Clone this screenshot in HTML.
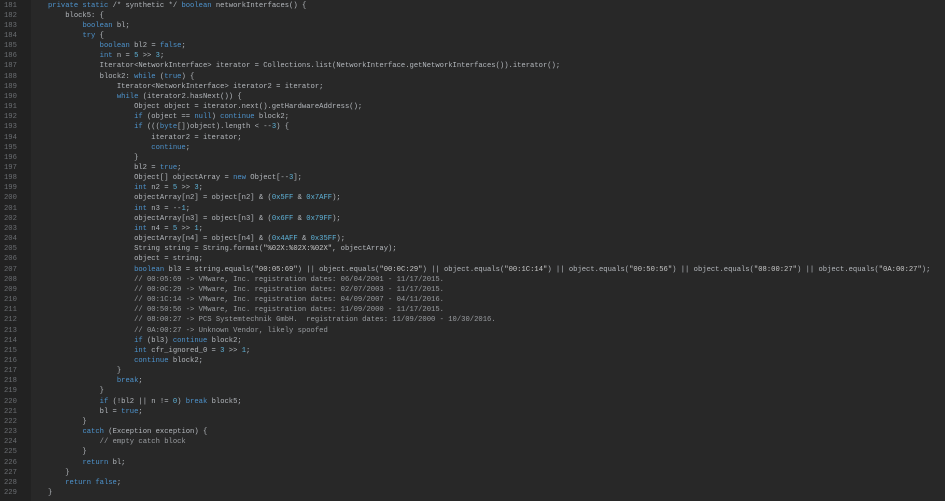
<!DOCTYPE html>
<html><head><meta charset="utf-8"><style>
html,body{margin:0;padding:0;width:945px;height:501px;overflow:hidden;background:#282828;}
.bg{position:absolute;left:0;top:0;width:945px;height:501px;background-image:linear-gradient(#282828,#282828);}
.g{position:absolute;left:0;top:0;width:31px;height:501px;background-image:linear-gradient(#222222,#222222);}
pre{margin:0;position:absolute;top:0.5px;font-family:"Liberation Mono",monospace;font-size:7.18px;line-height:10.15px;color:#b4b8bd;}
.n{left:4px;color:#6b6e72;}
.c{left:48px;}
.k{color:#4e94ce;}
.m{color:#5fb3d9;}
.s{color:#c9c9c9;}
.cm{color:#9a9da1;}
</style></head><body>
<div class="bg"></div>
<div class="g"></div>
<pre class="n">181
182
183
184
185
186
187
188
189
190
191
192
193
194
195
196
197
198
199
200
201
202
203
204
205
206
207
208
209
210
211
212
213
214
215
216
217
218
219
220
221
222
223
224
225
226
227
228
229</pre>
<pre class="c"><span class="k">private static</span> /* synthetic */ <span class="k">boolean</span> networkInterfaces() {
    block5: {
        <span class="k">boolean</span> bl;
        <span class="k">try</span> {
            <span class="k">boolean</span> bl2 = <span class="k">false</span>;
            <span class="k">int</span> n = <span class="m">5</span> &gt;&gt; <span class="m">3</span>;
            Iterator&lt;NetworkInterface&gt; iterator = Collections.list(NetworkInterface.getNetworkInterfaces()).iterator();
            block2: <span class="k">while</span> (<span class="k">true</span>) {
                Iterator&lt;NetworkInterface&gt; iterator2 = iterator;
                <span class="k">while</span> (iterator2.hasNext()) {
                    Object object = iterator.next().getHardwareAddress();
                    <span class="k">if</span> (object == <span class="k">null</span>) <span class="k">continue</span> block2;
                    <span class="k">if</span> (((<span class="k">byte</span>[])object).length &lt; --<span class="m">3</span>) {
                        iterator2 = iterator;
                        <span class="k">continue</span>;
                    }
                    bl2 = <span class="k">true</span>;
                    Object[] objectArray = <span class="k">new</span> Object[--<span class="m">3</span>];
                    <span class="k">int</span> n2 = <span class="m">5</span> &gt;&gt; <span class="m">3</span>;
                    objectArray[n2] = object[n2] &amp; (<span class="m">0x5FF</span> &amp; <span class="m">0x7AFF</span>);
                    <span class="k">int</span> n3 = --<span class="m">1</span>;
                    objectArray[n3] = object[n3] &amp; (<span class="m">0x6FF</span> &amp; <span class="m">0x79FF</span>);
                    <span class="k">int</span> n4 = <span class="m">5</span> &gt;&gt; <span class="m">1</span>;
                    objectArray[n4] = object[n4] &amp; (<span class="m">0x4AFF</span> &amp; <span class="m">0x35FF</span>);
                    String string = String.format(<span class="s">"%02X:%02X:%02X"</span>, objectArray);
                    object = string;
                    <span class="k">boolean</span> bl3 = string.equals(<span class="s">"00:05:69"</span>) || object.equals(<span class="s">"00:0C:29"</span>) || object.equals(<span class="s">"00:1C:14"</span>) || object.equals(<span class="s">"00:50:56"</span>) || object.equals(<span class="s">"08:00:27"</span>) || object.equals(<span class="s">"0A:00:27"</span>);
                    <span class="cm">// 00:05:69 -&gt; VMware, Inc. registration dates: 06/04/2001 - 11/17/2015.</span>
                    <span class="cm">// 00:0C:29 -&gt; VMware, Inc. registration dates: 02/07/2003 - 11/17/2015.</span>
                    <span class="cm">// 00:1C:14 -&gt; VMware, Inc. registration dates: 04/09/2007 - 04/11/2016.</span>
                    <span class="cm">// 00:50:56 -&gt; VMware, Inc. registration dates: 11/09/2000 - 11/17/2015.</span>
                    <span class="cm">// 08:00:27 -&gt; PCS Systemtechnik GmbH.  registration dates: 11/09/2000 - 10/30/2016.</span>
                    <span class="cm">// 0A:00:27 -&gt; Unknown Vendor, likely spoofed</span>
                    <span class="k">if</span> (bl3) <span class="k">continue</span> block2;
                    <span class="k">int</span> cfr_ignored_0 = <span class="m">3</span> &gt;&gt; <span class="m">1</span>;
                    <span class="k">continue</span> block2;
                }
                <span class="k">break</span>;
            }
            <span class="k">if</span> (!bl2 || n != <span class="m">0</span>) <span class="k">break</span> block5;
            bl = <span class="k">true</span>;
        }
        <span class="k">catch</span> (Exception exception) {
            <span class="cm">// empty catch block</span>
        }
        <span class="k">return</span> bl;
    }
    <span class="k">return false</span>;
}</pre>
</body></html>
